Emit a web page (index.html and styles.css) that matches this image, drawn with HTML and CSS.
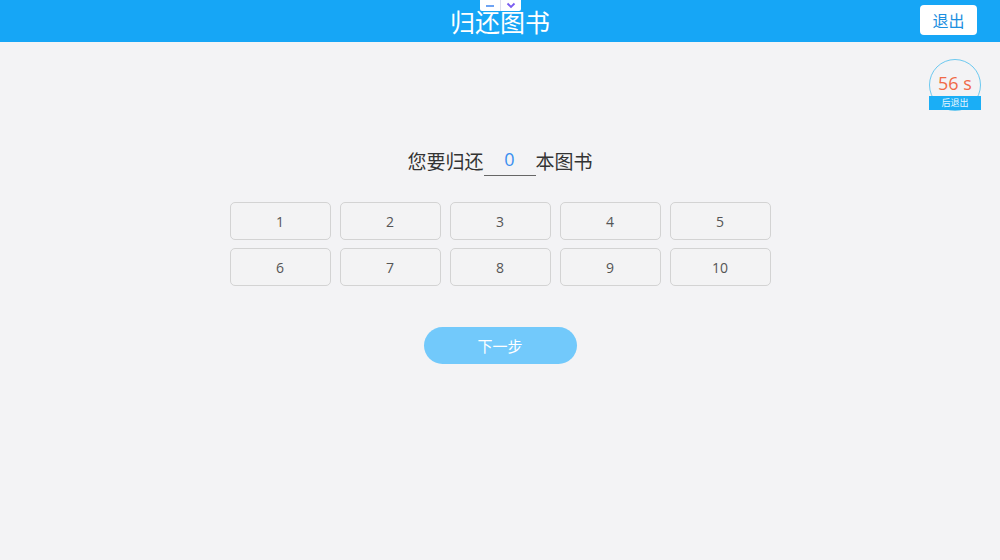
FILE: index.html
```html
<!DOCTYPE html>
<html lang="zh">
<head>
<meta charset="utf-8">
<link rel="stylesheet" href="styles.css">
</head>
<body>
<header class="header">
  <div class="tab">
    <span class="tab-cell"><svg width="10" height="4" viewBox="0 0 10 4"><path d="M1 2H9" stroke="#4a8cf0" stroke-width="1.6"/></svg></span>
    <span class="tab-cell"><svg width="10" height="7" viewBox="0 0 10 7"><path d="M1.5 1.5L5 5L8.5 1.5" stroke="#7a5cf0" stroke-width="1.8" fill="none"/></svg></span>
  </div>
  <h1 class="title">归还图书</h1>
  <button class="exit">退出</button>
</header>
<main class="main">
  <div class="timer">
    <div class="timer-circle">56 s</div>
    <div class="timer-label">后退出</div>
  </div>
  <p class="question">您要归还<span class="count">0</span>本图书</p>
  <div class="grid">
    <button class="num">1</button>
    <button class="num">2</button>
    <button class="num">3</button>
    <button class="num">4</button>
    <button class="num">5</button>
    <button class="num">6</button>
    <button class="num">7</button>
    <button class="num">8</button>
    <button class="num">9</button>
    <button class="num">10</button>
  </div>
  <button class="next">下一步</button>
</main>
</body>
</html>
```
FILE: styles.css
```css
* { box-sizing: border-box; }
html, body { margin: 0; padding: 0; }
body {
  width: 1000px;
  height: 560px;
  background: #f3f3f5;
  font-family: "Noto Sans CJK SC", "Noto Sans", sans-serif;
  overflow: hidden;
}
.header {
  position: relative;
  height: 42px;
  background: #16a6f6;
  display: flex;
  align-items: center;
  justify-content: center;
}
.title {
  margin: 0;
  color: #fff;
  font-size: 25px;
  font-weight: 400;
  line-height: 42px;
}
.tab {
  position: absolute;
  top: 0;
  left: 480px;
  width: 41px;
  height: 11px;
  background: #fff;
  border-radius: 0 0 2px 2px;
  display: flex;
}
.tab-cell {
  flex: 1;
  display: flex;
  align-items: center;
  justify-content: center;
}
.tab-cell + .tab-cell { border-left: 1px solid #dde; }
.exit {
  position: absolute;
  right: 23px;
  top: 5px;
  width: 57px;
  height: 30px;
  border: none;
  border-radius: 4px;
  background: #fff;
  color: #1b8fe0;
  font-family: inherit;
  font-size: 16px;
  padding: 0;
}
.main {
  position: relative;
  display: flex;
  flex-direction: column;
  align-items: center;
}
.timer {
  position: absolute;
  top: 17px;
  left: 929px;
  width: 52px;
  height: 52px;
}
.timer-circle {
  width: 52px;
  height: 52px;
  border: 1.5px solid #6cc9f0;
  border-radius: 50%;
  color: #f06a48;
  font-family: "Open Sans", sans-serif;
  font-size: 18px;
  display: flex;
  align-items: center;
  justify-content: center;
  padding-bottom: 5px;
}
.timer-label {
  position: absolute;
  left: 0;
  top: 37px;
  width: 52px;
  height: 14px;
  background: #1aaef6;
  color: #e8f6ff;
  font-size: 9px;
  line-height: 14px;
  text-align: center;
}
.question {
  margin: 104px 0 0;
  font-size: 19px;
  color: #333;
  line-height: 30px;
  display: flex;
}
.count {
  display: inline-block;
  width: 52px;
  border-bottom: 1px solid #666;
  color: #3a8ff0;
  text-align: center;
  font-family: "Open Sans", sans-serif;
  font-size: 18px;
  line-height: 27px;
}
.grid {
  margin-top: 26px;
  display: grid;
  grid-template-columns: repeat(5, 101px);
  gap: 8px 9px;
}
.num {
  height: 38px;
  border: 1px solid #d3d3d3;
  border-radius: 5px;
  background: #f3f3f4;
  color: #555;
  font-family: "Open Sans", sans-serif;
  font-size: 14px;
  padding: 1px 0 0;
}
.next {
  margin-top: 41px;
  width: 153px;
  height: 37px;
  border: none;
  border-radius: 19px;
  background: #72c9fb;
  color: #fff;
  font-family: inherit;
  font-size: 15px;
  padding: 0;
}
```
